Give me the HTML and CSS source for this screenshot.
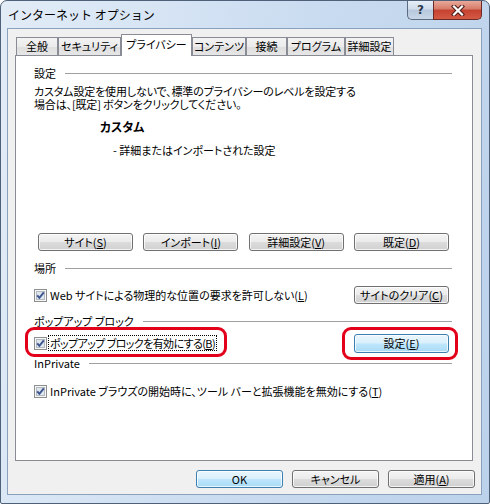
FILE: index.html
```html
<!DOCTYPE html>
<html lang="ja">
<head>
<meta charset="utf-8">
<title>インターネット オプション</title>
<link rel="stylesheet" href="styles.css">
</head>
<body>
<div class="window">
  <div class="titlebar">
    <span class="title">インターネット オプション</span>
    <div class="caption-buttons">
      <span class="cbtn help">?</span>
      <span class="cbtn close">
        <svg width="16" height="11" viewBox="0 0 16 11">
          <path d="M4 1.5 L12 9.5 M12 1.5 L4 9.5" stroke="#4b1b17" stroke-width="4.2" stroke-linecap="square" fill="none"/>
          <path d="M4 1.5 L12 9.5 M12 1.5 L4 9.5" stroke="#ffffff" stroke-width="2.2" stroke-linecap="square" fill="none"/>
        </svg>
      </span>
    </div>
  </div>
  <div class="client">
    <div class="tabs">
      <span class="tab w1">全般</span>
      <span class="tab w2">セキュリティ</span>
      <span class="tab w3 active">プライバシー</span>
      <span class="tab w4">コンテンツ</span>
      <span class="tab w5">接続</span>
      <span class="tab w6">プログラム</span>
      <span class="tab w7">詳細設定</span>
    </div>
    <div class="panel">
      <div class="group g1">設定</div>
      <p class="desc">カスタム設定を使用しないで、標準のプライバシーのレベルを設定する<br>場合は、[既定] ボタンをクリックしてください。</p>
      <div class="level">カスタム</div>
      <div class="level-desc">- 詳細またはインポートされた設定</div>
      <div class="btn-row">
        <span class="btn">サイト(<u>S</u>)</span>
        <span class="btn">インポート(<u>I</u>)</span>
        <span class="btn">詳細設定(<u>V</u>)</span>
        <span class="btn">既定(<u>D</u>)</span>
      </div>
      <div class="group g2">場所</div>
      <div class="row r1">
        <span class="check">
          <svg class="cb" width="13" height="13" viewBox="0 0 13 13"><rect x="0.5" y="0.5" width="12" height="12" fill="#f6f6f6" stroke="#8e8f8f"/><rect x="2.5" y="2.5" width="8" height="8" fill="#dfe5ec" stroke="#b4bac2"/><path d="M3.2 6.3 L5.4 8.8 L9.8 3.4" stroke="#3d5590" stroke-width="2" fill="none"/></svg>
          <span class="lbl">Web サイトによる物理的な位置の要求を許可しない(<u>L</u>)</span>
        </span>
        <span class="btn">サイトのクリア(<u>C</u>)</span>
      </div>
      <div class="group g3">ポップアップ ブロック</div>
      <div class="row r2">
        <span class="check mark-left">
          <svg class="cb" width="13" height="13" viewBox="0 0 13 13"><rect x="0.5" y="0.5" width="12" height="12" fill="#f6f6f6" stroke="#8e8f8f"/><rect x="2.5" y="2.5" width="8" height="8" fill="#dfe5ec" stroke="#b4bac2"/><path d="M3.2 6.3 L5.4 8.8 L9.8 3.4" stroke="#3d5590" stroke-width="2" fill="none"/></svg>
          <span class="lbl focus">ポップアップ ブロックを有効にする(<u>B</u>)</span>
        </span>
        <span class="btn default mark-right">設定(<u>E</u>)</span>
      </div>
      <div class="group g4">InPrivate</div>
      <div class="row r3">
        <span class="check">
          <svg class="cb" width="13" height="13" viewBox="0 0 13 13"><rect x="0.5" y="0.5" width="12" height="12" fill="#f6f6f6" stroke="#8e8f8f"/><rect x="2.5" y="2.5" width="8" height="8" fill="#dfe5ec" stroke="#b4bac2"/><path d="M3.2 6.3 L5.4 8.8 L9.8 3.4" stroke="#3d5590" stroke-width="2" fill="none"/></svg>
          <span class="lbl">InPrivate ブラウズの開始時に、ツール バーと拡張機能を無効にする(<u>T</u>)</span>
        </span>
      </div>
    </div>
    <div class="footer">
      <span class="btn default fbtn">OK</span>
      <span class="btn fbtn">キャンセル</span>
      <span class="btn fbtn">適用(<u>A</u>)</span>
    </div>
  </div>
</div>
</body>
</html>
```
FILE: styles.css
```css
html, body {
  margin: 0;
  padding: 0;
  background: #ffffff;
}
body {
  font-family: "Noto Sans CJK JP", "Noto Sans", sans-serif;
  font-size: 11px;
  color: #000;
  font-feature-settings: "palt" 1;
}
.window {
  box-sizing: border-box;
  width: 490px;
  height: 504px;
  border: 1px solid #4f6178;
  border-radius: 7px 7px 2px 2px;
  background: linear-gradient(100deg, #e2ecf7 0%, #d3e2f3 35%, #c7daef 60%, #bcd2eb 100%);
  padding: 0 7px 8px 6px;
  display: flex;
  flex-direction: column;
}
.titlebar {
  height: 28px;
  display: flex;
  align-items: flex-start;
}
.title {
  font-feature-settings: normal;
  font-size: 12px;
  line-height: 16px;
  padding: 6px 0 0 1px;
  color: #000;
}
.caption-buttons {
  margin-left: auto;
  display: flex;
}
.cbtn {
  box-sizing: border-box;
  height: 19px;
  display: flex;
  align-items: center;
  justify-content: center;
  border: 1px solid #5b6b80;
  border-top: none;
}
.help {
  width: 26px;
  border-radius: 0 0 0 5px;
  border-right: none;
  background: linear-gradient(#e6eef7 0%, #d0dceb 45%, #b6c8dd 50%, #c9d7e7 100%);
  font-family: "DejaVu Sans", sans-serif;
  font-weight: bold;
  font-size: 12px;
  color: #2c3a4c;
}
.close {
  width: 49px;
  border-radius: 0 0 5px 0;
  border-color: #6b2a24;
  background: linear-gradient(#e9a99a 0%, #d67a68 45%, #c5412f 50%, #d45a45 100%);
}
.client {
  flex: 1;
  box-sizing: border-box;
  border: 1px solid #8aa1bd;
  background: #f0f0f0;
  padding: 5px 8px 6px 7px;
  display: flex;
  flex-direction: column;
}
.tabs {
  display: flex;
  align-items: flex-end;
  height: 22px;
  margin-bottom: -1px;
  padding-left: 1px;
  position: relative;
  z-index: 1;
}
.tab {
  box-sizing: border-box;
  height: 18px;
  margin-bottom: 1px;
  border: 1px solid #898c95;
  border-bottom: none;
  background: linear-gradient(#f3f3f3 0%, #ebebeb 50%, #dedede 51%, #e6e6e6 100%);
  text-align: center;
  line-height: 16px;
  white-space: nowrap;
}
.tab.active {
  height: 22px;
  margin-bottom: 0;
  background: #ffffff;
  line-height: 18px;
}
.w1 { width: 42px; }
.w2 { width: 63px; }
.w3 { width: 71px; }
.w4 { width: 54px; }
.w5 { width: 41px; }
.w6 { width: 58px; }
.w7 { width: 49px; }
.panel {
  box-sizing: border-box;
  height: 406px;
  background: #ffffff;
  border: 1px solid #898c95;
  padding: 10px 20px 0 18px;
}
.group {
  display: flex;
  align-items: center;
  height: 14px;
  line-height: 14px;
  white-space: nowrap;
}
.group::after {
  content: "";
  flex: 1;
  height: 0;
  border-top: 1px solid #a0a0a0;
  margin-left: 9px;
}
.desc {
  margin: 5px 0 0 0;
  line-height: 13px;
  letter-spacing: -0.15px;
}
.level {
  margin: 9px 0 0 66px;
  line-height: 14px;
  font-weight: bold;
  font-size: 12px;
}
.level-desc {
  margin: 9px 0 0 79px;
  line-height: 14px;
}
.btn-row {
  display: flex;
  justify-content: space-between;
  margin: 76px 3px 0 4px;
}
.btn {
  box-sizing: border-box;
  display: inline-block;
  width: 95px;
  height: 18px;
  border: 1px solid #707070;
  border-radius: 3px;
  background: linear-gradient(#f4f4f4 0%, #ebebeb 48%, #dcdcdc 52%, #d0d0d0 100%);
  box-shadow: inset 0 0 0 1px rgba(255, 255, 255, 0.75);
  text-align: center;
  line-height: 16px;
  white-space: nowrap;
}
.btn.default {
  border-color: #3c7fb1;
  background: linear-gradient(#eaf6fd 0%, #d9f0fc 48%, #bee6fd 52%, #a9dbf6 100%);
}
.g2 { margin-top: 10px; }
.row {
  display: flex;
  align-items: center;
  justify-content: space-between;
  padding-right: 3px;
}
.r1 { height: 20px; margin-top: 10px; }
.g3 { margin-top: 9px; }
.r2 { height: 20px; margin-top: 5px; }
.r2 .btn { height: 19px; line-height: 17px; }
.g4 { margin-top: 3px; }
.r3 { height: 14px; margin-top: 14px; }
.check {
  display: flex;
  align-items: center;
  line-height: 14px;
}
.cb {
  display: block;
  margin-right: 2px;
}
.lbl {
  white-space: nowrap;
  padding: 0 1px;
}
.focus {
  outline: 1px dotted #000;
  outline-offset: 0;
  letter-spacing: -0.6px;
}
.mark-left, .mark-right {
  position: relative;
}
.mark-left::after {
  content: "";
  position: absolute;
  left: -9px;
  right: -11px;
  top: -9px;
  bottom: -7px;
  border: 3px solid #e3001b;
  border-radius: 9px;
}
.mark-right::after {
  content: "";
  position: absolute;
  left: -13px;
  right: -10px;
  top: -8px;
  bottom: -8px;
  border: 3px solid #e3001b;
  border-radius: 9px;
}
.footer {
  display: flex;
  justify-content: flex-end;
  gap: 9px;
  margin-top: 9px;
  margin-right: -2px;
}
.fbtn {
  width: 87px;
}
```
